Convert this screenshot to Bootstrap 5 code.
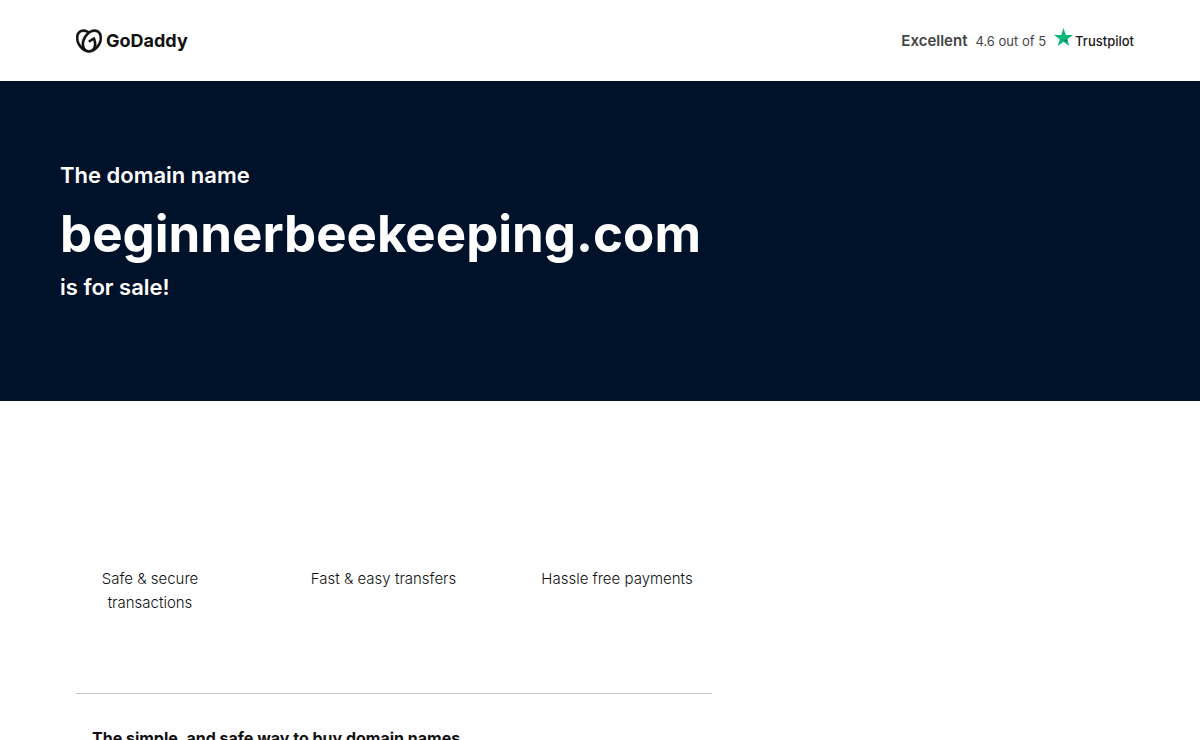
<!DOCTYPE html>
<html lang="en">
<head>
<meta charset="utf-8">
<meta name="viewport" content="width=device-width, initial-scale=1">
<title>beginnerbeekeeping.com is for sale</title>
<link href="https://cdn.jsdelivr.net/npm/bootstrap@5.3.0/dist/css/bootstrap.min.css" rel="stylesheet">
<style>
body { font-family: Inter, "Liberation Sans", sans-serif; color: #111; background: #fff; }
.page-wrap { padding-left: 60px; padding-right: 60px; }
.site-header { min-height: 81px; }
.brand { color: #111; font-size: 18px; line-height: 24px; font-weight: 700; }
.rating { color: #444; font-size: 13px; line-height: 24px; padding-right: 6px; }
.rating-word { font-size: 15px; font-weight: 600; }
.trust { color: #191919; font-size: 13px; font-weight: 500; gap: 2px; }
.hero { background: #00112a; min-height: 320px; padding-top: 76px; padding-bottom: 80px; }
.hero-line { font-size: 22px; line-height: 36px; font-weight: 600; }
.hero-domain { font-size: 51px; line-height: 70px; font-weight: 700; padding-top: 6px; overflow-wrap: anywhere; }
.main-col { max-width: 668px; padding-top: 166px; }
.features { font-size: 15px; font-weight: 300; line-height: 24px; padding: 0 31px 0 10px; }
.feature { width: 160px; }
.divider { border-color: #c4c4c4; margin: 78px 0 32px; }
.section-title { font-size: 16px; line-height: 24px; font-weight: 700; }
</style>
</head>
<body>
<header class="site-header page-wrap d-flex flex-wrap align-items-center justify-content-between">
  <a href="#" class="brand d-flex align-items-center gap-1 ps-3 text-decoration-none">
    <svg width="26" height="26" viewBox="0 0 24 24" fill="currentColor" stroke="currentColor" stroke-width=".3" aria-hidden="true"><path d="M20.702 2.29c-2.494-1.554-5.778-1.187-8.706.654C9.076 1.104 5.79.736 3.3 2.29c-3.941 2.463-4.42 8.806-1.07 14.167 2.47 3.954 6.333 6.269 9.77 6.226 3.439.043 7.301-2.273 9.771-6.226 3.347-5.361 2.872-11.704-1.069-14.167zM4.042 15.328a12.838 12.838 0 01-1.546-3.541 10.12 10.12 0 01-.336-3.338c.15-1.98.956-3.524 2.27-4.345 1.315-.822 3.052-.87 4.903-.137.281.113.556.24.825.382A15.11 15.11 0 007.5 7.54c-2.035 3.255-2.655 6.878-1.945 9.765a13.247 13.247 0 01-1.514-1.98zm17.465-3.541a12.866 12.866 0 01-1.547 3.54 13.25 13.25 0 01-1.513 1.984c.635-2.589.203-5.76-1.353-8.734a.39.39 0 00-.563-.153l-4.852 3.032a.397.397 0 00-.126.546l.712 1.139a.395.395 0 00.547.126l3.145-1.965c.101.306.203.606.28.916.296 1.086.41 2.214.335 3.337-.15 1.982-.956 3.525-2.27 4.347a4.437 4.437 0 01-2.25.65h-.101a4.432 4.432 0 01-2.25-.65c-1.314-.822-2.121-2.365-2.27-4.347-.074-1.123.039-2.251.335-3.337a13.212 13.212 0 014.05-6.482 10.148 10.148 0 012.849-1.765c1.845-.733 3.586-.685 4.9.137 1.316.822 2.122 2.365 2.271 4.345a10.146 10.146 0 01-.33 3.334z"/></svg>
    <span>GoDaddy</span>
  </a>
  <div class="rating d-flex align-items-center gap-2">
    <span class="rating-word">Excellent</span>
    <span>4.6 out of 5</span>
    <a href="#" class="trust d-flex align-items-center text-decoration-none">
      <svg class="mb-2" width="19" height="18" viewBox="0 0 19 18" aria-hidden="true"><path fill="#00b67a" d="M9.500 0L11.740 6.880H19L13.130 11.130L15.370 18L9.500 13.750L3.630 18L5.870 11.130L0 6.880H7.260Z"/><path fill="#005128" d="M13.630 12.690L13.130 11.130L9.500 13.750Z"/></svg>
      <span>Trustpilot</span>
    </a>
  </div>
</header>
<section class="hero page-wrap text-white">
  <h1 class="m-0">
    <span class="hero-line d-block">The domain name</span>
    <span class="hero-domain d-block">beginnerbeekeeping.com</span>
    <span class="hero-line d-block">is for sale!</span>
  </h1>
</section>
<main class="page-wrap">
  <div class="main-col">
    <div class="features d-flex justify-content-between text-center">
      <div class="feature">Safe &amp; secure transactions</div>
      <div class="feature">Fast &amp; easy transfers</div>
      <div class="feature">Hassle free payments</div>
    </div>
    <div class="px-3">
      <hr class="divider opacity-100">
      <h2 class="section-title px-3">The simple, and safe way to buy domain names</h2>
    </div>
  </div>
</main>
<script src="https://cdn.jsdelivr.net/npm/bootstrap@5.3.0/dist/js/bootstrap.bundle.min.js"></script>
</body>
</html>
